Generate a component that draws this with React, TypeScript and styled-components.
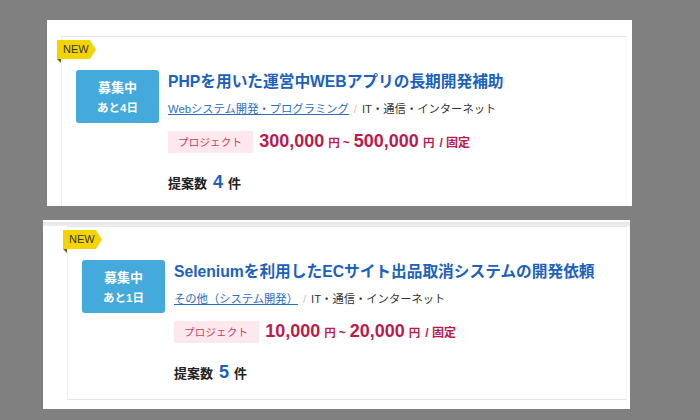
import React from "react";
import styled, { createGlobalStyle } from "styled-components";

const Global = createGlobalStyle`
  html, body { margin: 0; padding: 0; background: #808080; }
  * { box-sizing: border-box; }
`;

const Page = styled.div`
  width: 700px;
  height: 420px;
  overflow: hidden;
  background: #808080;
  padding-top: 20px;
  font-family: "Liberation Sans", "Noto Sans CJK JP", sans-serif;
`;

const Shot = styled.div<{ $left: number; $width: number; $height: number; $top: number }>`
  margin-left: ${(p) => p.$left}px;
  margin-top: ${(p) => p.$top}px;
  width: ${(p) => p.$width}px;
  height: ${(p) => p.$height}px;
  background: #fff;
  overflow: hidden;
`;

const Inner = styled.div<{ $padTop: number; $padLeft: number; $padRight: number }>`
  padding: ${(p) => p.$padTop}px ${(p) => p.$padRight}px 0 ${(p) => p.$padLeft}px;
`;

const Band = styled.div`
  height: 6px;
  border-top: 2px solid #fff;
  background: linear-gradient(#e4e4e4, #efefef);
`;

const Item = styled.div<{ $height: number; $bottom?: boolean }>`
  position: relative;
  height: ${(p) => p.$height}px;
  border-top: 1px solid #e6e6e6;
  border-left: 1px solid #eeeeee;
  border-right: 1px solid #f7f7f7;
  border-bottom: ${(p) => (p.$bottom ? "1px solid #e6e6e6" : "none")};
  padding: 33px 0 0 14px;
  display: flex;
  align-items: flex-start;
  gap: 9px;
`;

const Ribbon = styled.span`
  position: absolute;
  left: -5px;
  top: 3px;
  width: 39px;
  height: 19px;
  padding-left: 6px;
  font-size: 11px;
  line-height: 19px;
  color: #333;
  background: #f3d400;
  clip-path: polygon(0 0, 84% 0, 100% 50%, 84% 100%, 0 100%);
`;

const Fold = styled.span`
  position: absolute;
  left: -5px;
  top: 22px;
  width: 0;
  height: 0;
  border-top: 4px solid #6f6000;
  border-left: 4px solid transparent;
`;

const Status = styled.div`
  width: 83px;
  height: 53px;
  flex: none;
  border-radius: 3px;
  background: #43aadb;
  color: #fff;
  font-weight: bold;
  display: flex;
  flex-direction: column;
  align-items: center;
  justify-content: center;
  padding-top: 2px;
`;

const StatusMain = styled.span`
  font-size: 13px;
  line-height: 20px;
`;

const StatusSub = styled.span`
  font-size: 11.5px;
  line-height: 20px;
`;

const Body = styled.div`
  display: flex;
  flex-direction: column;
`;

const Title = styled.div`
  font-size: 15.7px;
  line-height: 24px;
  font-weight: bold;
  color: #1b62bc;
  white-space: nowrap;
`;

const Category = styled.div`
  margin-top: 7px;
  font-size: 11.3px;
  line-height: 16px;
  color: #333;
  white-space: nowrap;
`;

const CatLink = styled.a`
  color: #2c6dc4;
  text-decoration: underline;
`;

const Sep = styled.span`
  color: #c8c8c8;
  margin: 0 5px;
`;

const PriceRow = styled.div`
  margin-top: 14px;
  display: flex;
  align-items: center;
  height: 22px;
`;

const Tag = styled.span`
  height: 22px;
  padding: 0 11px 0 10px;
  background: #fde8ed;
  color: #c8405f;
  font-size: 10.5px;
  line-height: 22px;
  letter-spacing: 0.2px;
`;

const Price = styled.span`
  margin-left: 6px;
  color: #bc1a4c;
  font-weight: bold;
  line-height: 22px;
  white-space: nowrap;
`;

const Num = styled.span`
  font-size: 18px;
`;

const Unit = styled.span`
  font-size: 11.5px;
  margin-left: 4px;
`;

const Tilde = styled.span`
  font-size: 12px;
  margin: 0 4px 0 3px;
`;

const Fixed = styled.span`
  font-size: 12px;
  margin-left: 5px;
`;

const Proposals = styled.div`
  margin-top: 18px;
  font-weight: bold;
  color: #222;
  line-height: 22px;
  white-space: nowrap;
`;

const PropLabel = styled.span`
  font-size: 13px;
`;

const PropNum = styled.span`
  font-size: 18px;
  color: #1b62bc;
  margin: 0 5px 0 6px;
`;

type Job = {
  days: number;
  title: string;
  category: string;
  min: string;
  max: string;
  proposals: number;
};

function JobItem({ job, height, bottom }: { job: Job; height: number; bottom?: boolean }) {
  return (
    <Item $height={height} $bottom={bottom}>
      <Ribbon>NEW</Ribbon>
      <Fold />
      <Status>
        <StatusMain>募集中</StatusMain>
        <StatusSub>あと{job.days}日</StatusSub>
      </Status>
      <Body>
        <Title>{job.title}</Title>
        <Category>
          <CatLink>{job.category}</CatLink>
          <Sep>/</Sep>
          IT・通信・インターネット
        </Category>
        <PriceRow>
          <Tag>プロジェクト</Tag>
          <Price>
            <Num>{job.min}</Num>
            <Unit>円</Unit>
            <Tilde>~</Tilde>
            <Num>{job.max}</Num>
            <Unit>円</Unit>
            <Fixed>/ 固定</Fixed>
          </Price>
        </PriceRow>
        <Proposals>
          <PropLabel>提案数</PropLabel>
          <PropNum>{job.proposals}</PropNum>
          <PropLabel>件</PropLabel>
        </Proposals>
      </Body>
    </Item>
  );
}

const jobs: Job[] = [
  {
    days: 4,
    title: "PHPを用いた運営中WEBアプリの長期開発補助",
    category: "Webシステム開発・プログラミング",
    min: "300,000",
    max: "500,000",
    proposals: 4,
  },
  {
    days: 1,
    title: "Seleniumを利用したECサイト出品取消システムの開発依頼",
    category: "その他（システム開発）",
    min: "10,000",
    max: "20,000",
    proposals: 5,
  },
];

export default function App() {
  return (
    <>
      <Global />
      <Page>
        <Shot $left={47} $width={585} $height={186} $top={0}>
          <Inner $padTop={16} $padLeft={14} $padRight={5}>
            <JobItem job={jobs[0]} height={200} />
          </Inner>
        </Shot>
        <Shot $left={43} $width={587} $height={189} $top={14}>
          <Band />
          <Inner $padTop={0} $padLeft={24} $padRight={3}>
            <JobItem job={jobs[1]} height={174} bottom />
          </Inner>
        </Shot>
      </Page>
    </>
  );
}
